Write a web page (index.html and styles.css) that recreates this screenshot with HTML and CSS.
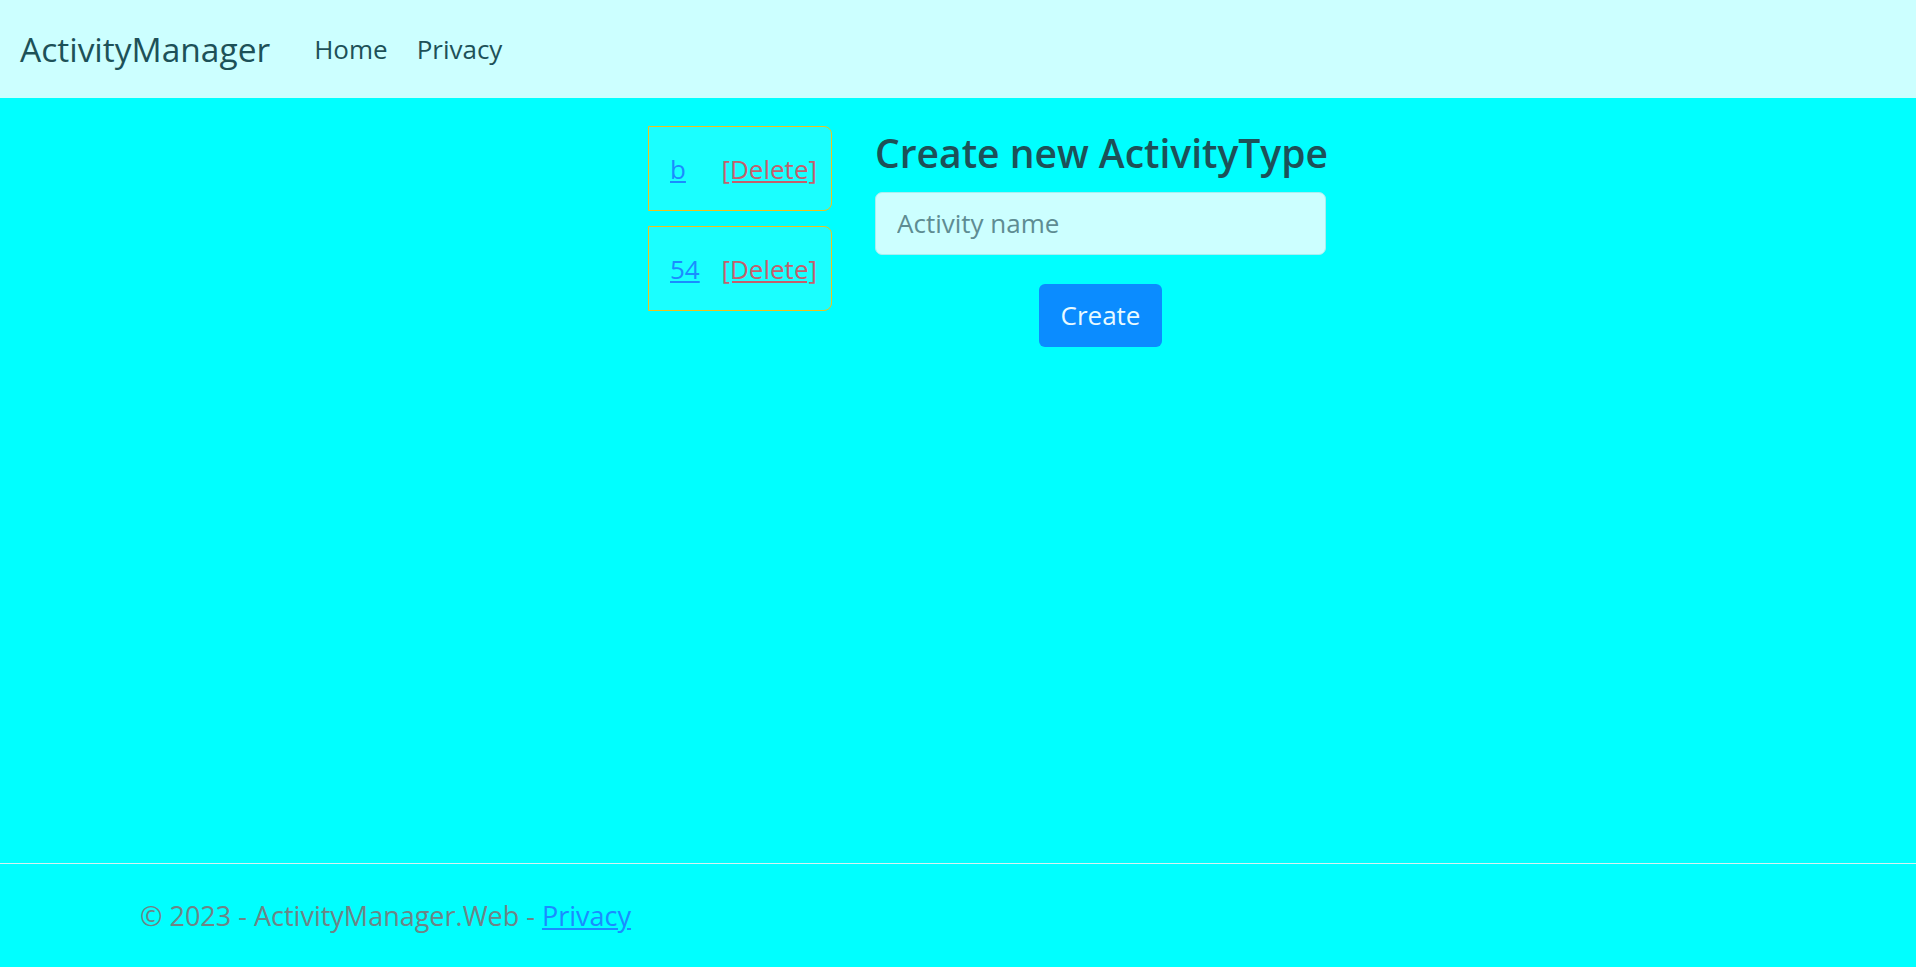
FILE: index.html
```html
<!DOCTYPE html>
<html lang="en">
<head>
<meta charset="utf-8">
<title>ActivityManager</title>
<link rel="stylesheet" href="styles.css">
</head>
<body>
<header class="navbar">
  <a class="brand" href="#">ActivityManager</a>
  <nav class="nav">
    <a class="nav-link" href="#">Home</a>
    <a class="nav-link" href="#">Privacy</a>
  </nav>
</header>
<main class="main">
  <div class="types">
    <div class="type-card">
      <a class="type-link" href="#">b</a>
      <a class="delete-link" href="#">[Delete]</a>
    </div>
    <div class="type-card">
      <a class="type-link" href="#">54</a>
      <a class="delete-link" href="#">[Delete]</a>
    </div>
  </div>
  <form class="create-form">
    <h3 class="form-title">Create new ActivityType</h3>
    <input class="form-input" type="text" placeholder="Activity name">
    <div class="form-actions">
      <button class="btn-create" type="button">Create</button>
    </div>
  </form>
</main>
<footer class="footer">
  <div class="footer-inner">© 2023 - ActivityManager.Web - <a class="footer-link" href="#">Privacy</a></div>
</footer>
</body>
</html>
```

FILE: styles.css
```css
* { box-sizing: border-box; }
html, body { height: 100%; }
body {
  margin: 0;
  background: #00ffff;
  color: #1d5158;
  font-family: "Open Sans", "Noto Sans", sans-serif;
  font-size: 26px;
  display: flex;
  flex-direction: column;
  min-height: 100vh;
}
.navbar {
  height: 98px;
  background: #ccffff;
  display: flex;
  align-items: center;
  padding-left: 20px;
  flex-shrink: 0;
}
.brand {
  color: #1d5158;
  text-decoration: none;
  font-size: 33.5px;
  margin-right: 44px;
}
.nav { display: flex; gap: 29px; }
.nav-link {
  color: #1d5158;
  text-decoration: none;
  font-size: 26px;
}
.main {
  display: flex;
  justify-content: center;
  align-items: flex-start;
  padding: 28px 0 0 58px;
  gap: 43px;
}
.types {
  display: flex;
  flex-direction: column;
  gap: 15px;
  width: 184px;
}
.type-card {
  height: 85px;
  border: 1px solid #f0c21a;
  border-radius: 0 8px 8px 0;
  background: #1affff;
  display: flex;
  align-items: center;
  justify-content: space-between;
  padding: 0 14px 0 21px;
}
.type-link { color: #1a8cff; }
.delete-link { color: #c4606c; }
.create-form {
  width: 451px;
  display: flex;
  flex-direction: column;
}
.form-title {
  margin: 4px 0 15px;
  font-size: 39px;
  font-weight: 600;
  line-height: 1.2;
  white-space: nowrap;
}
.form-input {
  height: 63px;
  width: 100%;
  background: #ccffff;
  border: 1px solid #a8eef0;
  border-radius: 7px;
  padding: 0 21px;
  font-family: inherit;
  font-size: 26px;
  color: #1d5158;
}
.form-input::placeholder { color: #5e8c92; }
.form-actions {
  display: flex;
  justify-content: center;
  padding-top: 29px;
}
.btn-create {
  width: 123px;
  height: 63px;
  background: #0b8cff;
  border: none;
  border-radius: 6px;
  color: #e8faff;
  font-family: inherit;
  font-size: 26px;
}
.footer {
  margin-top: auto;
  height: 104px;
  border-top: 1px solid #d6f2f2;
  display: flex;
  align-items: center;
}
.footer-inner {
  padding-left: 140px;
  color: #6e8486;
  font-size: 27px;
}
.footer-link { color: #1a8cff; }
```
